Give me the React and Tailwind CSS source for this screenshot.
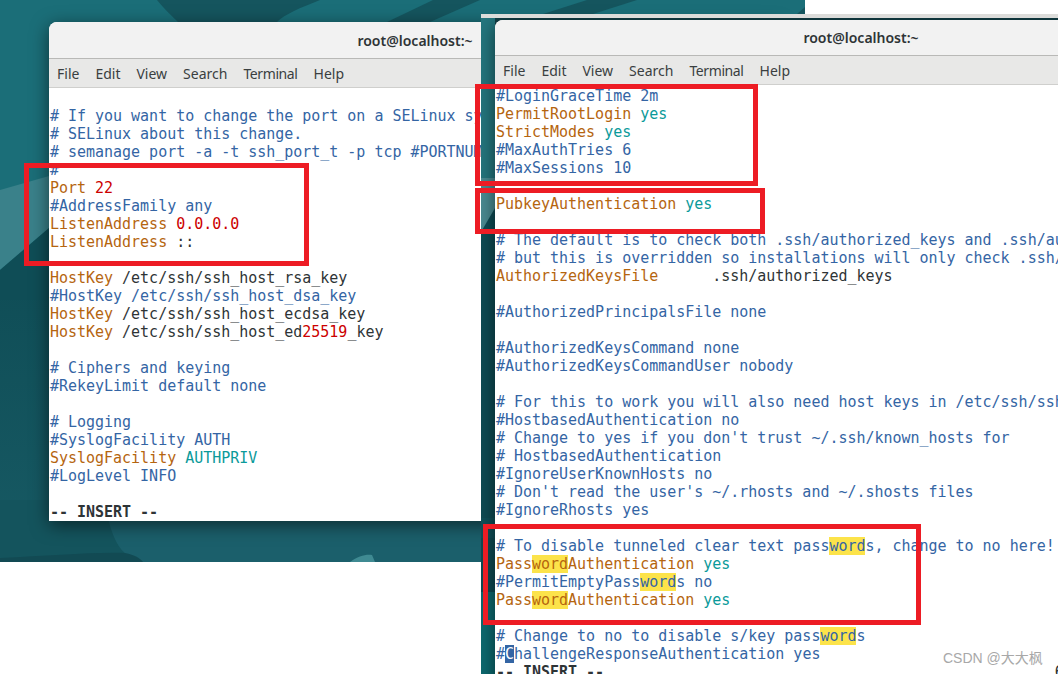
import React from 'react';

const tone = {
  c: 'text-[#3465a4]',
  k: 'text-[#b5650f]',
  v: 'text-[#0b9a9a]',
  r: 'text-[#cc0000]',
  t: 'text-[#2e3436]',
  b: 'text-[#2e3436] font-bold',
  h: 'text-[#b5650f] bg-[#fce34a]',
  hc: 'text-[#3465a4] bg-[#fce34a]',
  cur: 'text-white bg-[#3465a4]',
};

const leftLines = [
  [],
  [['# If you want to change the port on a SELinux system, you have to tell', 'c']],
  [['# SELinux about this change.', 'c']],
  [['# semanage port -a -t ssh_port_t -p tcp #PORTNUMBER', 'c']],
  [['#', 'c']],
  [['Port ', 'k'], ['22', 'r']],
  [['#AddressFamily any', 'c']],
  [['ListenAddress ', 'k'], ['0.0.0.0', 'r']],
  [['ListenAddress ', 'k'], ['::', 't']],
  [],
  [['HostKey', 'k'], [' /etc/ssh/ssh_host_rsa_key', 't']],
  [['#HostKey /etc/ssh/ssh_host_dsa_key', 'c']],
  [['HostKey', 'k'], [' /etc/ssh/ssh_host_ecdsa_key', 't']],
  [['HostKey', 'k'], [' /etc/ssh/ssh_host_ed', 't'], ['25519', 'r'], ['_key', 't']],
  [],
  [['# Ciphers and keying', 'c']],
  [['#RekeyLimit default none', 'c']],
  [],
  [['# Logging', 'c']],
  [['#SyslogFacility AUTH', 'c']],
  [['SyslogFacility ', 'k'], ['AUTHPRIV', 'v']],
  [['#LogLevel INFO', 'c']],
  [],
  [['-- INSERT --', 'b']],
];

const rightLines = [
  [['#LoginGraceTime 2m', 'c']],
  [['PermitRootLogin ', 'k'], ['yes', 'v']],
  [['StrictModes ', 'k'], ['yes', 'v']],
  [['#MaxAuthTries 6', 'c']],
  [['#MaxSessions 10', 'c']],
  [],
  [['PubkeyAuthentication ', 'k'], ['yes', 'v']],
  [],
  [['# The default is to check both .ssh/authorized_keys and .ssh/authorized_keys2', 'c']],
  [['# but this is overridden so installations will only check .ssh/authorized_keys', 'c']],
  [['AuthorizedKeysFile', 'k'], ['      .ssh/authorized_keys', 't']],
  [],
  [['#AuthorizedPrincipalsFile none', 'c']],
  [],
  [['#AuthorizedKeysCommand none', 'c']],
  [['#AuthorizedKeysCommandUser nobody', 'c']],
  [],
  [['# For this to work you will also need host keys in /etc/ssh/ssh_known_hosts', 'c']],
  [['#HostbasedAuthentication no', 'c']],
  [["# Change to yes if you don't trust ~/.ssh/known_hosts for", 'c']],
  [['# HostbasedAuthentication', 'c']],
  [['#IgnoreUserKnownHosts no', 'c']],
  [["# Don't read the user's ~/.rhosts and ~/.shosts files", 'c']],
  [['#IgnoreRhosts yes', 'c']],
  [],
  [['# To disable tunneled clear text pass', 'c'], ['word', 'hc'], ['s, change to no here!', 'c']],
  [['Pass', 'k'], ['word', 'h'], ['Authentication ', 'k'], ['yes', 'v']],
  [['#PermitEmptyPass', 'c'], ['word', 'hc'], ['s no', 'c']],
  [['Pass', 'k'], ['word', 'h'], ['Authentication ', 'k'], ['yes', 'v']],
  [],
  [['# Change to no to disable s/key pass', 'c'], ['word', 'hc'], ['s', 'c']],
  [['#', 'c'], ['C', 'cur'], ['hallengeResponseAuthentication yes', 'c']],
  [['-- INSERT --', 'b'], ['                                                  6', 't']],
];

const menu = ['File', 'Edit', 'View', 'Search', 'Terminal', 'Help'];

function TerminalWindow({ lines, titleH, bodyPad }) {
  return (
    <div className="flex flex-col w-[732px] h-full bg-white rounded-t-lg overflow-hidden shadow-[0_4px_18px_rgba(0,0,0,0.55)]">
      <div className={`${titleH} shrink-0 flex items-center justify-center bg-[#f2f2f2] border-b border-[#b9b9b7] font-['Noto_Sans',sans-serif] text-[14px] font-semibold text-[#2e3436]`}>
        root@localhost:~
      </div>
      <div className="h-[29px] shrink-0 flex items-center gap-4 pl-2 bg-[#e8e8e7] border-b border-[#cfcfcd] font-['Noto_Sans',sans-serif] text-[14px] text-[#3a3f41]">
        {menu.map((m) => (
          <span key={m} className={m === 'Terminal' ? 'tracking-[-0.4px]' : ''}>{m}</span>
        ))}
      </div>
      <div className={`${bodyPad} pl-px font-['DejaVu_Sans_Mono',monospace] text-[15px] tracking-[-0.02px] leading-[18px] whitespace-pre`}>
        {lines.map((line, i) => (
          <div key={i} className="h-[18px]">
            {line.map(([text, key], j) => (
              <span key={j} className={tone[key]}>{text}</span>
            ))}
          </div>
        ))}
      </div>
    </div>
  );
}

function RedBox({ className }) {
  return <div className={`absolute border-[5px] border-[#ed1c24] ${className}`} />;
}

function LeftWallpaper() {
  return (
    <svg className="absolute inset-0" width="805" height="562" viewBox="0 0 805 562">
      <defs>
        <linearGradient id="wallLow" x1="0" y1="0" x2="0" y2="1">
          <stop offset="0" stopColor="#0f4d56" />
          <stop offset="1" stopColor="#175a64" />
        </linearGradient>
      </defs>
      <rect width="805" height="562" fill="#1b6e78" />
      <rect width="49" height="292" y="270" fill="url(#wallLow)" />
      <polygon points="0,190 49,176 49,228 0,270" fill="#3a818a" />
      <polygon points="0,270 49,228 49,300 0,300" fill="#0f4d56" />
      <path d="M157,0 C165,10 172,16 178,22 L277,22 C285,14 300,8 320,0 Z" fill="#15555e" />
      <polygon points="433,0 480,0 430,22 387,22" fill="#15555e" />
      <polygon points="587,0 637,0 593,14 543,14" fill="#15555e" />
      <polygon points="797,14 805,7 805,14" fill="#15555e" />
      <rect x="0" y="500" width="490" height="62" fill="#1b5f6b" />
      <path d="M0,500 L105,500 C108,525 115,545 125,553 L60,556 L0,560 Z" fill="#14545d" />
      <path d="M0,562 L0,558 C50,556 90,552 125,553 C135,555 140,558 143,562 Z" fill="#124a53" />
      <path d="M350,562 C358,556 366,554 372,555 L375,562 Z" fill="#3f8a92" />
    </svg>
  );
}

function RightWallpaper() {
  return (
    <svg className="absolute inset-0" width="14" height="656" viewBox="0 0 14 656">
      <rect width="14" height="656" fill="#0e4b54" />
      <rect width="14" height="160" fill="#24767e" />
      <polygon points="0,160 14,160 14,190 0,214" fill="#4a8b92" />
      <rect y="500" width="14" height="20" fill="#0f5059" />
      <rect y="574" width="14" height="82" fill="#0d6a70" />
    </svg>
  );
}

export default function App() {
  return (
    <div className="relative w-[1058px] h-[674px] bg-white overflow-hidden">
      {/* first screenshot */}
      <div className="absolute left-0 top-0 w-[805px] h-[562px] overflow-hidden">
        <LeftWallpaper />
        <div className="absolute left-[49px] top-[22px] h-[499px]">
          <TerminalWindow lines={leftLines} titleH="h-[37px]" bodyPad="pt-[1px]" />
        </div>
      </div>

      {/* second screenshot pasted on top */}
      <div className="absolute left-[481px] top-[14px] w-[577px] h-[660px] overflow-hidden bg-[#dcdcda]">
        <div className="absolute left-0 right-0 top-[4px] bottom-0 overflow-hidden">
          <div className="absolute inset-0 bg-[#123f46]" />
          <RightWallpaper />
          <div className="absolute left-[14px] top-[2px] h-[700px]">
            <TerminalWindow lines={rightLines} titleH="h-[36px]" bodyPad="pt-[2px]" />
          </div>
        </div>
      </div>

      <RedBox className="left-[24px] top-[163px] w-[285px] h-[103px]" />
      <RedBox className="left-[475px] top-[84px] w-[283px] h-[102px]" />
      <RedBox className="left-[475px] top-[188px] w-[290px] h-[46px]" />
      <RedBox className="left-[483px] top-[524px] w-[438px] h-[101px]" />

      <div className="absolute left-[943px] top-[648px] font-['Liberation_Sans','Noto_Sans_CJK_SC',sans-serif] text-[14px] leading-[20px] text-[#a8a8a8]">
        CSDN @大大枫
      </div>
    </div>
  );
}
